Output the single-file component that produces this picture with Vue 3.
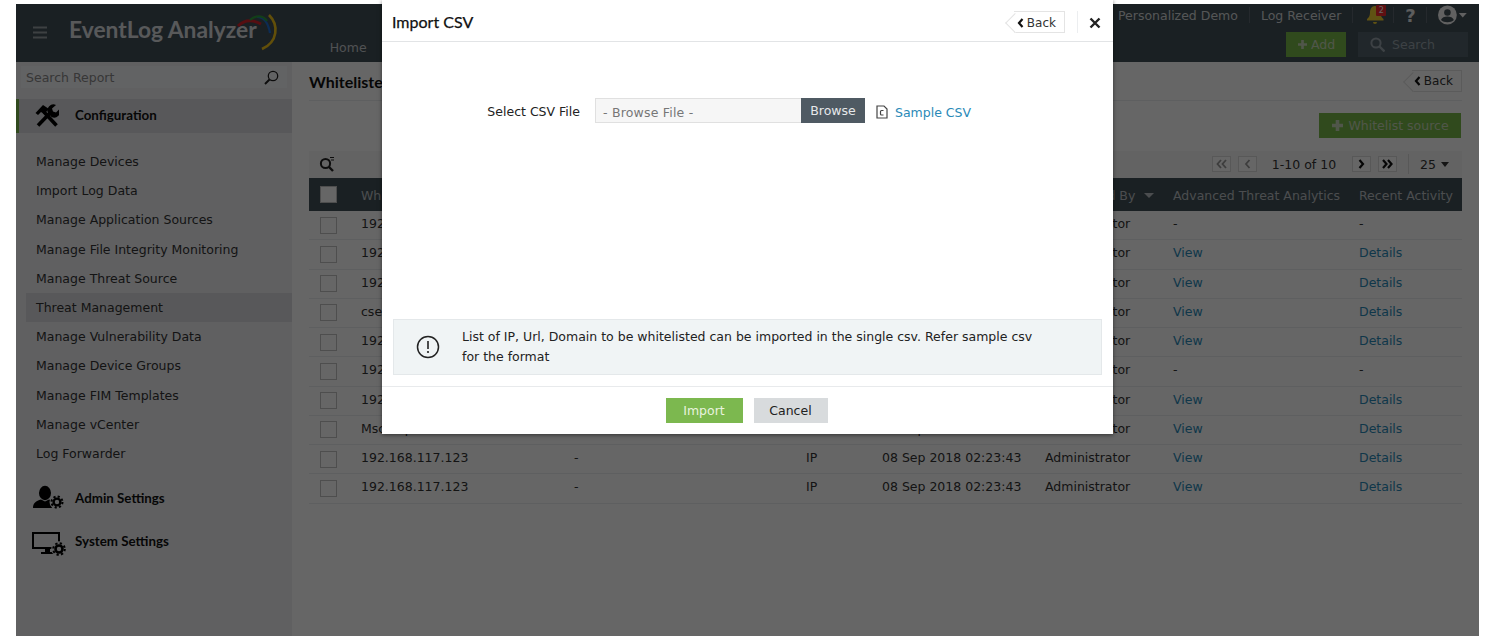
<script setup>
const menu = [
  'Manage Devices',
  'Import Log Data',
  'Manage Application Sources',
  'Manage File Integrity Monitoring',
  'Manage Threat Source',
  'Threat Management',
  'Manage Vulnerability Data',
  'Manage Device Groups',
  'Manage FIM Templates',
  'Manage vCenter',
  'Log Forwarder',
]

const rows = [
  { source: '192.168.117.123', threat: '-', activity: '-' },
  { source: '192.168.117.123', threat: 'View', activity: 'Details' },
  { source: '192.168.117.123', threat: 'View', activity: 'Details' },
  { source: 'csez.zohocorp.com', threat: 'View', activity: 'Details' },
  { source: '192.168.117.123', threat: 'View', activity: 'Details' },
  { source: '192.168.117.123', threat: '-', activity: '-' },
  { source: '192.168.117.123', threat: 'View', activity: 'Details' },
  { source: 'Msccorp.com', threat: 'View', activity: 'Details' },
  { source: '192.168.117.123', threat: 'View', activity: 'Details' },
  { source: '192.168.117.123', threat: 'View', activity: 'Details' },
]
</script>

<template>
  <div class="page">
    <div class="shell">
      <header class="topbar">
        <div class="brand">
          <svg class="burger" width="14" height="14" viewBox="0 0 14 14">
            <path d="M0 1.500h14M0 6.500h14M0 11.500h14" stroke="#9aa2a6" stroke-width="1.800" />
          </svg>
          <span class="logo-text">EventLog Analyzer</span>
          <svg class="logo-arcs" width="44" height="38" viewBox="0 0 44 38">
            <path d="M2 13C8 7 16 6 25 11" fill="none" stroke="#d8232b" stroke-width="3" />
            <path d="M21 4C27 4 32 9 34 20" fill="none" stroke="#1f6fd5" stroke-width="2.200" />
            <path d="M14 7C20 2 27 2 31 8" fill="none" stroke="#2f9f3e" stroke-width="2.200" />
            <path d="M33 2C43 12 42 29 26 36" fill="none" stroke="#f5c518" stroke-width="2.600" />
          </svg>
          <span class="home">Home</span>
        </div>
        <div class="top-right">
          <div class="top-links">
            <span>Personalized Demo</span>
            <i class="sep"></i>
            <span>Log Receiver</span>
            <i class="sep"></i>
            <span class="bell">
              <svg width="18" height="20" viewBox="0 0 18 20">
                <path d="M8 1c3.500 0 5.500 3 5.500 7 0 3 1.500 5 3 6v1.500H0V14c1.500-1 3-3 3-6 0-4 1.500-7 5-7zM6 17h4a2 2 0 0 1-4 0z" fill="#f0cc30" />
              </svg>
              <b class="badge">2</b>
            </span>
            <i class="sep"></i>
            <span class="help">?</span>
            <i class="sep"></i>
            <svg class="user" width="30" height="20" viewBox="0 0 30 20">
              <circle cx="9.500" cy="10" r="9.500" fill="#f2f2f2" />
              <circle cx="9.500" cy="7.500" r="3.300" fill="#435058" />
              <path d="M3 15c1.500-4.500 11.500-4.500 13 0-3 3-10 3-13 0z" fill="#435058" />
              <path d="M21 8h8l-4 4.500z" fill="#f2f2f2" />
            </svg>
          </div>
          <div class="top-actions">
            <button class="add-btn">
              <svg width="11" height="11" viewBox="0 0 11 11"><path d="M5.500 1v9M1 5.500h9" stroke="currentColor" stroke-width="2.600" /></svg>
              Add
            </button>
            <div class="top-search">
              <svg width="15" height="15" viewBox="0 0 15 15">
                <circle cx="6" cy="6" r="4.600" fill="none" stroke="currentColor" stroke-width="2" />
                <path d="M9.500 9.500l5 5" stroke="currentColor" stroke-width="2.400" />
              </svg>
              Search
            </div>
          </div>
        </div>
      </header>

      <div class="columns">
        <aside class="sidebar">
          <div class="side-search">
            <span>Search Report</span>
            <svg width="15" height="15" viewBox="0 0 15 15">
              <circle cx="9" cy="6" r="4.700" fill="none" stroke="#222" stroke-width="1.300" />
              <path d="M5.500 9.500L1 14" stroke="#222" stroke-width="2" />
            </svg>
          </div>
          <div class="side-head active">
            <svg class="head-icon" width="24" height="24" viewBox="0 0 24 24">
              <path d="M0.500 9L8 1l6 4-3 3-.5 3L6 8l-3 3z" fill="#000" />
              <path d="M9 8l12.500 13.500" stroke="#000" stroke-width="3.600" />
              <path d="M3 21.500L16 8" stroke="#000" stroke-width="3.600" />
              <path d="M13 9a6 6 0 0 1 8-8l-4 3.500 1 3 3 1 3.500-3.500a6 6 0 0 1-8 8z" fill="#000" />
            </svg>
            <span>Configuration</span>
          </div>
          <ul class="side-menu">
            <li v-for="item in menu" :key="item" :class="{ current: item === 'Threat Management' }">{{ item }}</li>
          </ul>
          <div class="side-head admin">
            <svg class="head-icon" width="33" height="26" viewBox="0 0 33 26">
              <ellipse cx="13" cy="8" rx="6" ry="7.200" fill="#000" />
              <path d="M1 23c0-5 3-7 8-8.500l4 2 4-2c3 1 5 2.500 6 5v3.500z" fill="#000" />
              <circle cx="25" cy="17" r="7.500" fill="#eff0f3" />
              <circle cx="25" cy="17" r="5.500" fill="none" stroke="#000" stroke-width="2" stroke-dasharray="2.160 2.160" />
              <circle cx="25" cy="17" r="3.400" fill="none" stroke="#000" stroke-width="2.400" />
            </svg>
            <span>Admin Settings</span>
          </div>
          <div class="side-head system">
            <svg class="head-icon" width="36" height="26" viewBox="0 0 36 26">
              <path d="M2 3h26v15H2z" fill="none" stroke="#000" stroke-width="2" />
              <path d="M10 22h13v2H10zM14 18h5v4h-5z" fill="#000" />
              <circle cx="28" cy="19" r="7.800" fill="#eff0f3" />
              <circle cx="28" cy="19" r="5.800" fill="none" stroke="#000" stroke-width="2" stroke-dasharray="2.280 2.280" />
              <circle cx="28" cy="19" r="3.500" fill="none" stroke="#000" stroke-width="2.600" />
            </svg>
            <span>System Settings</span>
          </div>
        </aside>

        <main class="content">
          <div class="title-row">
            <h1>Whitelisted Sources</h1>
            <button class="back">
              <svg width="7" height="10" viewBox="0 0 7 10"><path d="M5.500 1L2 5l3.500 4" fill="none" stroke="#111" stroke-width="2.200" /></svg>
              Back
            </button>
          </div>
          <div class="action-row">
            <button class="source-btn">
              <svg width="13" height="13" viewBox="0 0 13 13"><path d="M6.500 1v11M1 6.500h11" stroke="currentColor" stroke-width="3.600" /></svg>
              Whitelist source
            </button>
          </div>
          <div class="pager-row">
            <svg width="16" height="16" viewBox="0 0 16 16">
              <circle cx="6.500" cy="7.500" r="4.600" fill="none" stroke="#222" stroke-width="2" />
              <path d="M10 11l4 4" stroke="#222" stroke-width="2.400" />
              <path d="M11 1.500h4M12 4h3" stroke="#222" stroke-width="1" />
            </svg>
            <div class="pager">
              <span class="page-btn off">
                <svg width="11" height="10" viewBox="0 0 11 10"><path d="M5 1L1.500 5 5 9M10 1L6.500 5 10 9" fill="none" stroke="currentColor" stroke-width="1.800" /></svg>
              </span>
              <span class="page-btn off">
                <svg width="7" height="10" viewBox="0 0 7 10"><path d="M5.500 1L2 5l3.500 4" fill="none" stroke="currentColor" stroke-width="1.800" /></svg>
              </span>
              <span class="range">1-10 of 10</span>
              <span class="page-btn on">
                <svg width="7" height="10" viewBox="0 0 7 10"><path d="M1.500 1L5 5 1.500 9" fill="none" stroke="currentColor" stroke-width="2.200" /></svg>
              </span>
              <span class="page-btn on">
                <svg width="11" height="10" viewBox="0 0 11 10"><path d="M1 1l3.500 4L1 9M6 1l3.500 4L6 9" fill="none" stroke="currentColor" stroke-width="2.200" /></svg>
              </span>
              <i class="pager-sep"></i>
              <span class="per-page">25 <em class="caret"></em></span>
            </div>
          </div>
          <div class="table">
            <div class="row head">
              <span class="check"></span>
              <span>Whitelist Source</span>
              <span>Description</span>
              <span>Type</span>
              <span>Created Time</span>
              <span>Whitelisted By <em class="caret by-caret"></em></span>
              <span>Advanced Threat Analytics</span>
              <span>Recent Activity</span>
            </div>
            <div v-for="(row, i) in rows" :key="i" class="row">
              <span class="check"></span>
              <span>{{ row.source }}</span>
              <span>-</span>
              <span>IP</span>
              <span>08 Sep 2018 02:23:43</span>
              <span>Administrator</span>
              <span :class="{ link: row.threat !== '-' }">{{ row.threat }}</span>
              <span :class="{ link: row.activity !== '-' }">{{ row.activity }}</span>
            </div>
          </div>
        </main>
      </div>
      <div class="overlay"></div>
    </div>

    <section class="modal">
      <div class="modal-head">
        <h2>Import CSV</h2>
        <div class="modal-tools">
          <button class="back small">
            <svg width="7" height="10" viewBox="0 0 7 10"><path d="M5.500 1L2 5l3.500 4" fill="none" stroke="#111" stroke-width="2.200" /></svg>
            Back
          </button>
          <i class="tool-sep"></i>
          <svg class="close" width="12" height="12" viewBox="0 0 12 12">
            <path d="M1.500 1.500l9 9M10.500 1.500l-9 9" stroke="#222" stroke-width="2.400" />
          </svg>
        </div>
      </div>
      <div class="modal-body">
        <div class="file-row">
          <label>Select CSV File</label>
          <div class="file-input">
            <span class="file-name">- Browse File -</span>
            <span class="browse">Browse</span>
          </div>
          <svg class="csv-icon" width="12" height="14" viewBox="0 0 12 14">
            <path d="M1 1h7l3 3v9H1z" fill="none" stroke="#444" stroke-width="1.200" />
            <path d="M7.500 5.500h-2a1 1 0 0 0-1 1v2.500a1 1 0 0 0 1 1h2" fill="none" stroke="#444" stroke-width="1.200" />
          </svg>
          <a class="sample">Sample CSV</a>
        </div>
        <div class="note">
          <svg width="24" height="24" viewBox="0 0 24 24">
            <circle cx="12" cy="12" r="10.500" fill="none" stroke="#222" stroke-width="1.500" />
            <path d="M12 6v8" stroke="#222" stroke-width="1.600" />
            <circle cx="12" cy="17" r="1.100" fill="#222" />
          </svg>
          <p>List of IP, Url, Domain to be whitelisted can be imported in the single csv. Refer sample csv for the format</p>
        </div>
      </div>
      <div class="modal-foot">
        <button class="import">Import</button>
        <button class="cancel">Cancel</button>
      </div>
    </section>
  </div>
</template>

<style>
html, body {
  background: #fff;
  overflow: hidden;
}
</style>

<style scoped>
.page {
  position: relative;
  height: 636px;
  padding: 4px 8px 0 16px;
  box-sizing: border-box;
  overflow: hidden;
  font-family: "DejaVu Sans", Verdana, sans-serif;
  font-size: 12.5px;
  color: #333;
}

button {
  font-family: inherit;
  border: none;
}

.shell {
  position: relative;
  height: 632px;
  background: #fff;
  display: flex;
  flex-direction: column;
}

.overlay {
  position: absolute;
  inset: 0;
  background: rgba(0, 0, 0, 0.6);
}

.topbar {
  height: 58px;
  flex: none;
  background: #435058;
  display: flex;
  justify-content: space-between;
}

.brand {
  display: flex;
  align-items: center;
  padding-left: 17px;
  position: relative;
}

.logo-text {
  font-family: Lato, sans-serif;
  font-size: 22.800px;
  font-weight: 700;
  margin-left: 22px;
  color: #dcdfe1;
  padding-bottom: 9px;
}

.logo-arcs {
  position: absolute;
  left: 220px;
  top: 9px;
}

.home {
  margin-left: 73px;
  margin-top: 28px;
  color: #c7ccd0;
}

.top-right {
  width: 361px;
  padding-right: 11px;
  box-sizing: border-box;
  display: flex;
  flex-direction: column;
  align-items: flex-end;
  gap: 6px;
}

.top-links {
  height: 22px;
  width: 100%;
  display: flex;
  align-items: center;
  color: #d4d8da;
  gap: 11px;
  white-space: nowrap;
}

.sep {
  width: 1px;
  height: 16px;
  background: #5c6870;
}

.bell {
  position: relative;
  display: flex;
  margin-left: 3px;
  margin-right: -3px;
}

.badge {
  position: absolute;
  left: 9px;
  top: 0;
  width: 10px;
  height: 11px;
  font-size: 8px;
  font-weight: 400;
  line-height: 11px;
  text-align: center;
  background: #f0282d;
  color: #fff;
  border-radius: 1px;
}

.help {
  font-size: 18px;
  font-weight: 700;
  width: 10px;
  text-align: center;
  color: #e8e8e8;
}

.top-actions {
  display: flex;
  gap: 12px;
}

.add-btn {
  width: 60px;
  height: 25px;
  background: #78b94a;
  color: #c8d8b8;
  font-size: 12.5px;
  display: flex;
  align-items: center;
  justify-content: center;
  gap: 3px;
  padding: 0;
}

.top-search {
  width: 110px;
  height: 25px;
  background: #53626b;
  color: #98a4ac;
  font-size: 12.5px;
  display: flex;
  align-items: center;
  gap: 7px;
  padding-left: 12px;
  box-sizing: border-box;
}

.columns {
  flex: 1;
  display: flex;
}

.sidebar {
  width: 276px;
  flex: none;
  background: #eff0f3;
  padding-top: 4px;
  box-sizing: border-box;
}

.side-search {
  height: 22px;
  margin: 0 5px;
  background: #f6f7fa;
  display: flex;
  align-items: center;
  justify-content: space-between;
  padding: 0 8px 0 5px;
  color: #8a8a8a;
}

.side-head {
  display: flex;
  align-items: center;
  font-family: Lato, sans-serif;
  font-weight: 700;
  font-size: 13.350px;
  color: #111;
  position: relative;
  padding-left: 59px;
}

.head-icon {
  position: absolute;
}

.active {
  height: 34px;
  margin-top: 11px;
  padding-bottom: 2px;
  box-sizing: border-box;
  background: #dcdde0;
  border-left: 3px solid #7cb84f;
  padding-left: 56px;
}

.active .head-icon {
  left: 16px;
  top: 5px;
}

.side-menu {
  list-style: none;
  margin: 14px 0 0;
  padding: 0;
}

.side-menu li {
  height: 29.2px;
  line-height: 29.2px;
  padding-left: 20px;
  color: #333;
}

.side-menu .current {
  background: #dcdde0;
  margin-left: 10px;
  padding-left: 10px;
}

.admin {
  height: 30px;
  margin-top: 15px;
}

.admin .head-icon {
  left: 16px;
  top: 2px;
}

.system {
  height: 30px;
  margin-top: 13px;
}

.system .head-icon {
  left: 15px;
  top: 4px;
}

.content {
  flex: 1;
  padding: 0 17px;
  min-width: 0;
}

.title-row {
  height: 38px;
  display: flex;
  align-items: center;
  justify-content: space-between;
  border-bottom: 1px solid #eceef0;
}

h1 {
  margin: 0;
  font-family: Lato, sans-serif;
  font-size: 16px;
  font-weight: 700;
  color: #111;
}

.back {
  position: relative;
  display: flex;
  align-items: center;
  justify-content: flex-end;
  gap: 3px;
  height: 22px;
  width: 50px;
  padding: 0 8px 0 0;
  box-sizing: border-box;
  background: #fff;
  border: 1px solid #e4e4e4;
  border-left: none;
  color: #333;
  font-size: 12px;
  white-space: nowrap;
}

.back::before {
  content: "";
  position: absolute;
  left: -6.500px;
  top: 3.500px;
  width: 13px;
  height: 13px;
  transform: rotate(45deg);
  border-left: 1px solid #e4e4e4;
  border-bottom: 1px solid #e4e4e4;
  background: #fff;
}

.back svg {
  position: relative;
}

.action-row {
  height: 50px;
  box-sizing: border-box;
  display: flex;
  justify-content: flex-end;
  align-items: flex-start;
  padding: 12px 1px 0 0;
}

.source-btn {
  width: 142px;
  height: 25px;
  padding: 0;
  background: #78b94a;
  color: #c8d8b8;
  font-size: 12.5px;
  display: flex;
  align-items: center;
  justify-content: center;
  gap: 4px;
}

.pager-row {
  height: 27px;
  box-sizing: border-box;
  background: #f8f8f8;
  display: flex;
  align-items: center;
  justify-content: space-between;
  padding: 0 13px 1px 10px;
}

.pager {
  display: flex;
  align-items: center;
  gap: 7px;
}

.page-btn {
  width: 19px;
  height: 16px;
  display: flex;
  align-items: center;
  justify-content: center;
  border: 1px solid #ddd;
  background: #fff;
  box-sizing: border-box;
}

.off {
  color: #999;
}

.on {
  color: #111;
}

.range {
  margin: 0 9px 0 8px;
}

.pager-sep {
  width: 1px;
  height: 20px;
  background: #ddd;
  margin: 0 4px;
}

.caret {
  display: inline-block;
  border: 4px solid transparent;
  border-top: 5px solid currentColor;
  border-bottom: none;
  margin-left: 1px;
  vertical-align: 2px;
}

.by-caret {
  border-width: 5px 5px 0;
  margin-left: 5px;
}

.row {
  display: grid;
  grid-template-columns: 52px 213px 232px 76px 163px 128px 186px 103px;
  height: 29.25px;
  align-items: center;
  border-bottom: 1px solid #eceef0;
  box-sizing: border-box;
  color: #333;
  white-space: nowrap;
}

.row span:not(.check) {
  margin-bottom: 3px;
}

.row.head {
  height: 33px;
  background: #435058;
  color: #bcc1c5;
  border: none;
}

.row.head span:not(.check) {
  margin-bottom: 0;
  margin-top: 2px;
}

.check {
  width: 17px;
  height: 17px;
  margin-left: 11px;
  border: 1px solid #c4c4c4;
  background: #fff;
  box-sizing: border-box;
}

.link {
  color: #2a8ab8;
}

.modal {
  position: absolute;
  left: 382px;
  top: 0;
  width: 731px;
  height: 434px;
  background: #fff;
  display: flex;
  flex-direction: column;
  box-shadow: 0 1px 4px rgba(0, 0, 0, 0.5);
}

.modal-head {
  height: 42px;
  flex: none;
  box-sizing: border-box;
  border-bottom: 1px solid #e2e4e6;
  display: flex;
  align-items: center;
  justify-content: space-between;
  padding: 3px 12px 0 10px;
}

h2 {
  margin: 0 0 2px;
  font-family: Lato, sans-serif;
  font-size: 16px;
  font-weight: 400;
  -webkit-text-stroke: 0.25px #111;
  color: #111;
}

.modal-tools {
  display: flex;
  align-items: center;
}

.small {
  width: 51px;
  padding-top: 1px;
}

.tool-sep {
  width: 1px;
  height: 22px;
  background: #eceef0;
  margin: 0 11px 0 12px;
}

.close {
  margin-top: 1px;
}

.modal-body {
  flex: 1;
  display: flex;
  flex-direction: column;
  justify-content: space-between;
  padding: 55px 11px 11px;
}

.file-row {
  display: flex;
  align-items: center;
  height: 26px;
}

label {
  width: 187px;
  text-align: right;
  color: #222;
  margin: 2px 15px 0 0;
  white-space: nowrap;
}

.file-input {
  display: flex;
  width: 270px;
  height: 25px;
}

.file-name {
  flex: 1;
  border: 1px solid #e0e0e0;
  border-right: none;
  background: #f6f6f6;
  color: #777;
  padding-left: 7px;
  line-height: 27px;
  letter-spacing: 0.2px;
}

.browse {
  width: 64px;
  background: #4f5a63;
  color: #e6e8ea;
  text-align: center;
  line-height: 25px;
}

.csv-icon {
  margin: 3px 0 0 11px;
}

.sample {
  margin-left: 7px;
  margin-top: 4px;
  color: #2a8ab8;
}

.note {
  height: 56px;
  box-sizing: border-box;
  background: #f0f4f5;
  border: 1px solid #e4e8ea;
  display: flex;
  align-items: center;
  padding-left: 22px;
}

.note svg {
  flex: none;
}

.note p {
  margin: 0 0 1px 22px;
  width: 575px;
  line-height: 20px;
  color: #222;
}

.modal-foot {
  height: 48px;
  flex: none;
  box-sizing: border-box;
  border-top: 1px solid #e8eaec;
  display: flex;
  justify-content: center;
  align-items: center;
  gap: 11px;
  padding-right: 2px;
}

.import {
  width: 77px;
  height: 25px;
  padding: 0;
  background: #7cb84f;
  color: #e8f3df;
  font-size: 12.5px;
}

.cancel {
  width: 74px;
  height: 25px;
  padding: 0;
  background: #d8dbdd;
  color: #222;
  font-size: 12.5px;
}
</style>
